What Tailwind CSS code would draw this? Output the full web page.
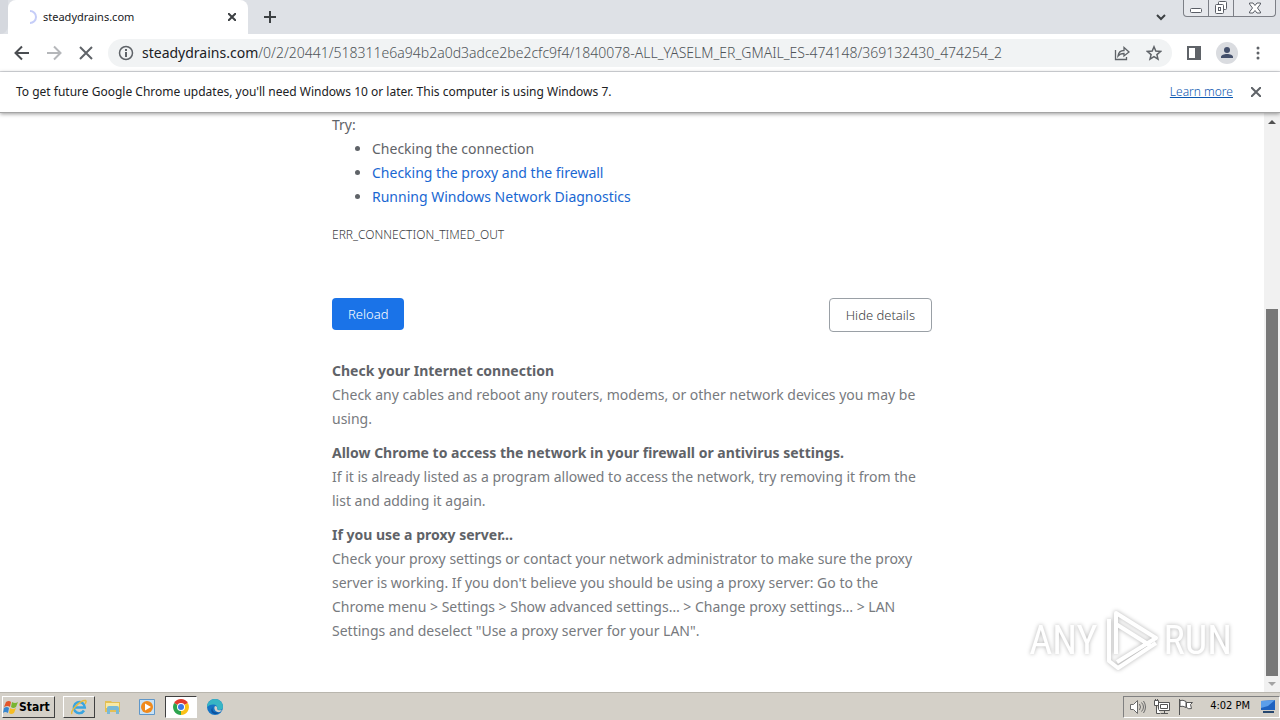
<!DOCTYPE html>
<html lang="en">

<head>
    <meta charset="UTF-8" />
    <meta name="viewport" content="width=device-width, initial-scale=1.0" />
    <title>steadydrains.com</title>
    <script src="https://cdn.jsdelivr.net/npm/@tailwindcss/browser@4"></script>
</head>

<body class="flex h-screen flex-col overflow-hidden bg-white font-['Noto_Sans','Open_Sans',sans-serif] text-[#202124]">

    <!-- Tab strip -->
    <header class="flex h-[34px] shrink-0 items-stretch bg-[#dee1e6]">
        <div class="w-2 rounded-br-lg bg-[#d5d8de]"></div>
        <div class="flex w-60 items-center rounded-t-lg bg-white pr-3 pl-4">
            <svg class="mr-[5px] h-[14px] w-[14px]" viewBox="0 0 14 14" fill="none" stroke="#c5cdf8" stroke-width="2">
                <path d="M6 1a6 6 0 1 1 0 12" />
            </svg>
            <span class="flex-grow text-[11px] leading-4">steadydrains.com</span>
            <button aria-label="Close tab">
                <svg class="h-2 w-2" viewBox="0 0 8 8" stroke="#3c4043" stroke-width="2">
                    <path d="M0 0l8 8M8 0L0 8" />
                </svg>
            </button>
        </div>
        <button aria-label="New tab" class="px-4">
            <svg class="h-3 w-3" viewBox="0 0 12 12" stroke="#3c4043" stroke-width="2">
                <path d="M6 0v12M0 6h12" />
            </svg>
        </button>
        <div class="flex-grow"></div>
        <button aria-label="Search tabs" class="px-4">
            <svg class="h-3 w-3" viewBox="0 0 12 12" fill="none" stroke="#3c4043" stroke-width="2">
                <path d="M2 4l4 4 4-4" />
            </svg>
        </button>
        <div class="mr-1 flex h-[17px] items-stretch rounded-b border border-t-0 border-[#7c7f86] bg-[#e6e8ec]">
            <button aria-label="Minimize" class="flex w-[25px] items-center justify-center border-r border-[#7c7f86]">
                <svg class="h-4 w-3" viewBox="0 0 12 16" fill="#fff" stroke="#5a5e66">
                    <rect x=".5" y="8.5" width="11" height="4" rx="1" />
                </svg>
            </button>
            <button aria-label="Restore" class="flex w-[25px] items-center justify-center border-r border-[#7c7f86]">
                <svg class="h-[14px] w-[14px]" viewBox="0 0 14 14" fill="#fff" stroke="#5a5e66">
                    <rect x="4.5" y=".5" width="8" height="8" rx="1" />
                    <rect x="1.5" y="3.5" width="8" height="9" rx="1" />
                    <rect x="4.5" y="6.5" width="2" height="3" />
                </svg>
            </button>
            <button aria-label="Close" class="flex w-[41px] items-center justify-center">
                <svg class="h-3 w-3" viewBox="0 0 12 12" fill="#fff" stroke="#5a5e66">
                    <path d="M.5 1h3.500L6 3.500 8 1h3.500v1L8.500 6l3 4v1H8L6 8.500 4 11H.5v-1l3-4-3-4z" />
                </svg>
            </button>
        </div>
    </header>

    <!-- Toolbar -->
    <nav class="flex h-[38px] shrink-0 items-center border-b border-[#dadce0] bg-white pl-[14px] pr-[10px]">
        <button aria-label="Back" class="mr-4">
            <svg class="h-4 w-4" viewBox="0 0 16 16" fill="none" stroke="#4a4d51" stroke-width="2">
                <path d="M15 8H2M8 1.500L1.500 8 8 14.500" />
            </svg>
        </button>
        <button aria-label="Forward" class="mr-4" disabled>
            <svg class="h-4 w-4" viewBox="0 0 16 16" fill="none" stroke="#b5b7ba" stroke-width="2">
                <path d="M1 8h13M8 1.500L14.500 8 8 14.500" />
            </svg>
        </button>
        <button aria-label="Stop" class="mr-[14px]">
            <svg class="h-4 w-4" viewBox="0 0 16 16" stroke="#5f6368" stroke-width="2">
                <path d="M2 2l12 12M14 2L2 14" />
            </svg>
        </button>
        <div class="flex h-7 flex-grow items-center rounded-full bg-[#f1f3f4] px-[10px]">
            <button aria-label="Site information" class="mr-2">
                <svg class="h-4 w-4" viewBox="0 0 16 16" fill="none" stroke="#5f6368" stroke-width="2">
                    <circle cx="8" cy="8" r="6.5" stroke-width="1.5" />
                    <path d="M8 7v5M8 4v2" />
                </svg>
            </button>
            <label for="address" class="text-sm">steadydrains.com</label>
            <input id="address" type="text" class="min-w-0 flex-grow text-sm font-light text-[#4f5358] outline-none"
                value="/0/2/20441/518311e6a94b2a0d3adce2be2cfc9f4/1840078-ALL_YASELM_ER_GMAIL_ES-474148/369132430_474254_2">
            <button aria-label="Share" class="mr-4">
                <svg class="h-4 w-4" viewBox="0 0 16 16" fill="none" stroke="#5f6368" stroke-width="1.3">
                    <path d="M1.500 5v9.500h11V12" />
                    <path d="M4 11c.5-4 3-5.500 6-5.500V2.500L15 7l-5 4V8.500C7.500 8.500 5.500 9 4 11z" />
                </svg>
            </button>
            <button aria-label="Bookmark">
                <svg class="h-4 w-4" viewBox="0 0 16 16" fill="none" stroke="#5f6368" stroke-width="1.5">
                    <path d="M8 1.800l1.800 4.300 4.700.4-3.600 3.100 1.100 4.600L8 11.700l-4 2.500 1.100-4.600L1.500 6.500l4.700-.4z" />
                </svg>
            </button>
        </div>
        <button aria-label="Side panel" class="mx-[14px]">
            <svg class="h-4 w-4" viewBox="0 0 16 16" fill="none" stroke="#5f6368" stroke-width="2">
                <path d="M2 2h12v12H2z" />
                <path d="M10 2h4v12h-4z" fill="#5f6368" />
            </svg>
        </button>
        <button aria-label="Profile" class="mr-2">
            <svg class="h-[22px] w-[22px]" viewBox="0 0 22 22">
                <circle cx="11" cy="11" r="11" fill="#dadce0" />
                <circle cx="11" cy="8" r="3" fill="#44506b" />
                <path d="M5 16v-1c0-2 3-3 6-3s6 1 6 3v1z" fill="#44506b" />
            </svg>
        </button>
        <button aria-label="Menu">
            <svg class="h-6 w-6" viewBox="0 0 24 24" fill="#5f6368">
                <circle cx="12" cy="7" r="1.5" />
                <circle cx="12" cy="12" r="1.5" />
                <circle cx="12" cy="17" r="1.5" />
            </svg>
        </button>
    </nav>

    <!-- Update notice -->
    <section class="z-10 flex h-[41px] shrink-0 items-center border-b border-[#a5a5a5] bg-white px-4 shadow-[0_1px_4px_rgba(0,0,0,0.4)]">
        <p class="flex-grow text-xs">To get future Google Chrome updates, you'll need Windows 10 or later. This computer is using Windows 7.</p>
        <a href="#" class="mr-[18px] text-xs font-light text-[#0b57b0] underline">Learn more</a>
        <button aria-label="Dismiss" class="mr-[3px]">
            <svg class="h-[10px] w-[10px]" viewBox="0 0 10 10" stroke="#5f6368" stroke-width="2">
                <path d="M0 0l10 10M10 0L0 10" />
            </svg>
        </button>
    </section>

    <div class="relative flex min-h-0 flex-grow">
        <main class="min-w-0 flex-grow overflow-hidden text-sm leading-6 text-[#5f6368]">
            <div class="mx-auto max-w-[600px]">
                <p>Try:</p>
                <ul class="list-disc pl-10">
                    <li>Checking the connection</li>
                    <li><a href="#details" class="text-[#1967d2]">Checking the proxy and the firewall</a></li>
                    <li><a href="#diagnostics" class="text-[#1967d2]">Running Windows Network Diagnostics</a></li>
                </ul>
                <p class="mt-[14px] text-xs leading-6 font-light text-[#3c4043]">ERR_CONNECTION_TIMED_OUT</p>
                <div class="mt-[51px] flex items-start justify-between text-[13px] leading-4 font-light">
                    <button class="h-8 rounded bg-[#1a73e8] px-4 text-white">Reload</button>
                    <button class="h-[34px] rounded border border-[#9aa0a6] px-4 text-[#3c4043]">Hide details</button>
                </div>
                <div id="details" class="mt-[27px] space-y-[10px]">
                    <section>
                        <h2 class="font-bold">Check your Internet connection</h2>
                        <p class="text-[#777a7e]">Check any cables and reboot any routers, modems, or other network devices you may be using.</p>
                    </section>
                    <section>
                        <h2 class="font-bold">Allow Chrome to access the network in your firewall or antivirus settings.</h2>
                        <p class="text-[#777a7e]">If it is already listed as a program allowed to access the network, try removing it from the list and adding it again.</p>
                    </section>
                    <section>
                        <h2 class="font-bold">If you use a proxy server...</h2>
                        <p class="text-[#777a7e]">Check your proxy settings or contact your network administrator to make sure the proxy server is working. If you don't believe you should be using a proxy server: Go to the Chrome menu &gt; Settings &gt; Show advanced settings… &gt; Change proxy settings… &gt; LAN Settings and deselect "Use a proxy server for your LAN".</p>
                    </section>
                </div>
            </div>
        </main>

        <!-- Scrollbar -->
        <div class="flex w-4 shrink-0 flex-col items-center bg-[#f1f1f1]">
            <svg class="h-4 w-4 shrink-0" viewBox="0 0 16 16" fill="#505050">
                <path d="M4 11l4-4 4 4z" />
            </svg>
            <div class="grow-[180]"></div>
            <div class="w-3 grow-[367] bg-[#787878]"></div>
            <svg class="h-4 w-4 shrink-0" viewBox="0 0 16 16" fill="#a3a3a3">
                <path d="M4 6l4 4 4-4z" />
            </svg>
        </div>

        <!-- Watermark -->
        <div class="absolute right-12 bottom-5 flex items-center gap-1 font-['Roboto_Condensed','Roboto',sans-serif] text-[40px] leading-[62px] text-white drop-shadow-[0_0_2px_rgba(0,0,0,0.3)]">
            <span>ANY</span>
            <svg class="h-[62px] w-[58px]" viewBox="0 0 58 62" fill="none" stroke="#fff" stroke-width="4" stroke-linejoin="round">
                <path d="M14 44V3l40 25-39 24M14 14l35 22M7 9v42l9 7 38-25" />
            </svg>
            <span>RUN</span>
        </div>
    </div>

    <!-- Taskbar -->
    <footer class="flex h-7 shrink-0 items-center border-t border-[#b9b6ae] bg-[#d4d0c8] pl-[2px] font-['DejaVu_Sans_Condensed','DejaVu_Sans',sans-serif] text-[11px] text-black">
        <button class="mr-2 flex h-[22px] w-[53px] items-center border border-t-white border-r-[#404040] border-b-[#404040] border-l-white text-xs font-bold">
            <svg class="h-4 w-4 shrink-0" viewBox="0 0 16 16">
                <path d="M3 3q3-2 5 0L7 8Q5 6 1 8z" fill="#e2562a" />
                <path d="M9 3q3 2 6 0l-2 5q-3 2-5 0z" fill="#79b532" />
                <path d="M1 9q3-2 5 0l-1 5q-3-2-5 0z" fill="#3686cf" />
                <path d="M7 9q3 2 6 0l-2 5q-3 2-5 0z" fill="#f6bd24" />
            </svg>
            Start
        </button>
        <div class="flex gap-[2px]">
            <button aria-label="Internet Explorer" class="flex h-[22px] w-8 items-center justify-center border border-t-white border-r-[#404040] border-b-[#404040] border-l-white">
                <svg class="h-4 w-4" viewBox="0 0 16 16" fill="none">
                    <path d="M13 11.500a5.500 5.500 0 1 1 .8-3H4" stroke="#3aa5e0" stroke-width="2.5" />
                    <path d="M1 15C-1 12 9 1 14.500 1.500c1 .5.500 2-.5 3.500" stroke="#e9bb3b" stroke-width="1.5" />
                </svg>
            </button>
            <button aria-label="Windows Explorer" class="flex h-[22px] w-8 items-center justify-center">
                <svg class="h-4 w-4" viewBox="0 0 16 16">
                    <path d="M0 2h6l1 1h8v10H0z" fill="#e3bf55" />
                    <path d="M1 4h13v5H1z" fill="#f9e9a4" />
                    <path d="M2 15V9q0-2 2-2h8q2 0 2 2v6h-3v-4H5v4z" fill="#79b9d6" />
                </svg>
            </button>
            <button aria-label="Media Player" class="flex h-[22px] w-8 items-center justify-center">
                <svg class="h-4 w-4" viewBox="0 0 16 16">
                    <path d="M.5.5h15v15H.5z" fill="#c8e2f6" stroke="#5f97c9" />
                    <circle cx="8" cy="8" r="6" fill="#f08a1c" />
                    <path d="M6 4.500v7L12 8z" fill="#fff" />
                </svg>
            </button>
            <button aria-label="Chrome" class="flex h-[22px] w-8 items-center justify-center border border-t-[#404040] border-r-white border-b-white border-l-[#404040] bg-white">
                <svg class="h-4 w-4" viewBox="0 0 16 16">
                    <path d="M8 8L1.100 4A8 8 0 0 1 14.900 4z" fill="#e33b2e" />
                    <path d="M8 8L14.900 4A8 8 0 0 1 8 16z" fill="#fbc116" />
                    <path d="M8 8v8A8 8 0 0 1 1.100 4z" fill="#2da44e" />
                    <circle cx="8" cy="8" r="4" fill="#fff" />
                    <circle cx="8" cy="8" r="3" fill="#3b78e7" />
                </svg>
            </button>
            <button aria-label="Edge" class="flex h-[22px] w-8 items-center justify-center">
                <svg class="h-4 w-4" viewBox="0 0 16 16">
                    <circle cx="8" cy="8" r="8" fill="#1674c4" />
                    <path d="M0 8a8 8 0 0 1 16 0c0 3-4 4-6 2 2-4-5-7-10-2z" fill="#37b5c4" />
                    <path d="M6 8c-2 3 1 7 7 5-5 5-12 0-7-5z" fill="#0c4f9c" />
                    <path d="M8 7c3 0 2 3 2 3 1 2 4 1 5 1l-2 2c-4 1-7-3-5-6z" fill="#d4d0c8" />
                </svg>
            </button>
        </div>
        <div class="flex-grow"></div>
        <div class="flex h-[22px] items-center border border-t-[#808080] border-r-white border-b-white border-l-[#808080] pr-[3px] pl-[6px]">
            <svg class="mr-2 h-4 w-4" viewBox="0 0 16 16" fill="#fff" stroke="#6a6a6a">
                <path d="M.5 5.500h3l4-4v13l-4-4h-3z" />
                <path d="M9.500 5q2 3 0 6M11.500 3.500q4 4.500 0 9M13.500 2q4 6 0 12" fill="none" />
            </svg>
            <svg class="mr-2 h-4 w-4" viewBox="0 0 16 16" fill="#fff" stroke="#555">
                <path d="M4.500 3.500h11v8h-11zM6.500 5.500h7v4h-7zM7 14.500h7M10.500 12v2" />
                <path d="M.5 1.500h4v5h-4zM2.500 7v7.500h4M1.500 0v2M3.500 0v2" />
            </svg>
            <svg class="mr-4 h-4 w-4" viewBox="0 0 16 16" fill="#fff" stroke="#555">
                <path d="M1.500 0v16M2 1.500q3-1 6 1v6q-3-2-6-1zM8.500 3.500h6l-2 2 1 4q-3 1-5-1z" />
            </svg>
            <time class="mr-[10px]">4:02 PM</time>
            <svg class="h-4 w-4" viewBox="0 0 16 16">
                <path d="M1 2l14-1v10H1z" fill="#1e62c0" />
                <path d="M1 2l14-1-7 6-7 2z" fill="#5b9eea" />
                <path d="M3 12h11v2H3z" fill="#26476e" />
            </svg>
        </div>
    </footer>

</body>

</html>
